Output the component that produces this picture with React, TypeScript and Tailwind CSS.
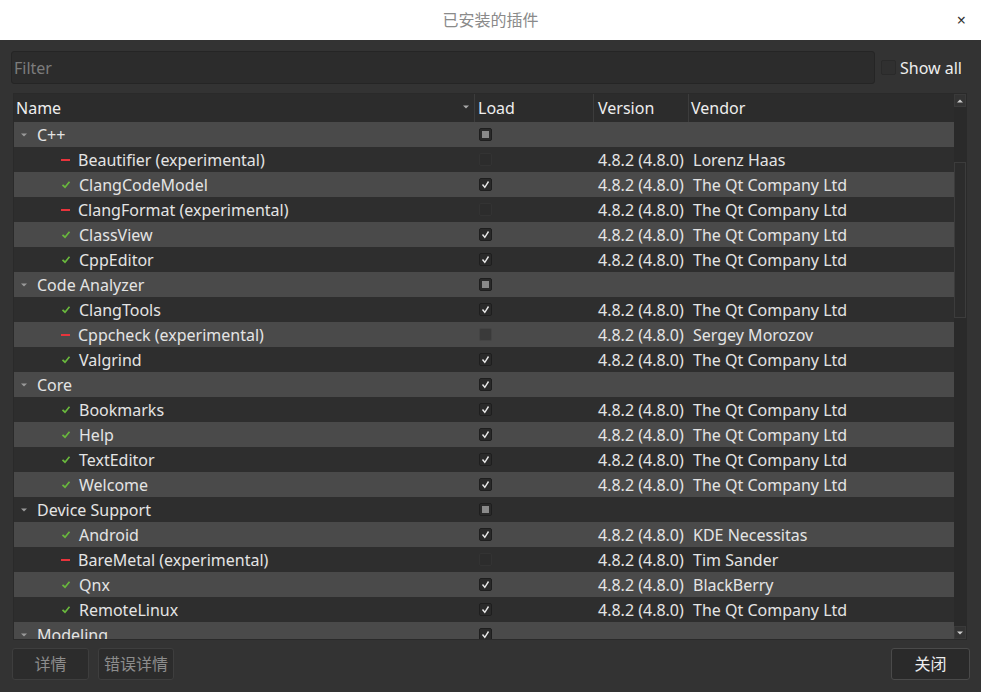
import React from "react";

type Row =
  | { kind: "cat"; name: string; state: "partial" | "checked" }
  | {
      kind: "item";
      name: string;
      ok: boolean;
      vendor: string;
    };

const QT = "The Qt Company Ltd";

const rows: Row[] = [
  { kind: "cat", name: "C++", state: "partial" },
  { kind: "item", name: "Beautifier (experimental)", ok: false, vendor: "Lorenz Haas" },
  { kind: "item", name: "ClangCodeModel", ok: true, vendor: QT },
  { kind: "item", name: "ClangFormat (experimental)", ok: false, vendor: QT },
  { kind: "item", name: "ClassView", ok: true, vendor: QT },
  { kind: "item", name: "CppEditor", ok: true, vendor: QT },
  { kind: "cat", name: "Code Analyzer", state: "partial" },
  { kind: "item", name: "ClangTools", ok: true, vendor: QT },
  { kind: "item", name: "Cppcheck (experimental)", ok: false, vendor: "Sergey Morozov" },
  { kind: "item", name: "Valgrind", ok: true, vendor: QT },
  { kind: "cat", name: "Core", state: "checked" },
  { kind: "item", name: "Bookmarks", ok: true, vendor: QT },
  { kind: "item", name: "Help", ok: true, vendor: QT },
  { kind: "item", name: "TextEditor", ok: true, vendor: QT },
  { kind: "item", name: "Welcome", ok: true, vendor: QT },
  { kind: "cat", name: "Device Support", state: "partial" },
  { kind: "item", name: "Android", ok: true, vendor: "KDE Necessitas" },
  { kind: "item", name: "BareMetal (experimental)", ok: false, vendor: "Tim Sander" },
  { kind: "item", name: "Qnx", ok: true, vendor: "BlackBerry" },
  { kind: "item", name: "RemoteLinux", ok: true, vendor: QT },
  { kind: "cat", name: "Modeling", state: "checked" },
];

const font = { fontFamily: '"Noto Sans", "Noto Sans CJK SC", sans-serif' };

function Box({ state, light }: { state: "checked" | "partial" | "off"; light: boolean }) {
  if (state === "off") {
    return (
      <div
        className={
          "h-[13px] w-[13px] rounded-[2px] " +
          (light ? "bg-[#3a3a3a] border border-[#444]" : "bg-[#2c2c2c] border border-[#333]")
        }
      />
    );
  }
  return (
    <div className="flex h-[13px] w-[13px] items-center justify-center rounded-[2px] border border-[#1e1e1e] bg-[#2a2a2a]">
      {state === "partial" ? (
        <div className="h-[7px] w-[7px] bg-[#8a8a8a]" />
      ) : (
        <svg width="9" height="9" viewBox="0 0 9 9">
          <path d="M1.5 4.5 L3.8 7.3 L7.5 1.5" fill="none" stroke="#e8e8e8" strokeWidth="1.4" />
        </svg>
      )}
    </div>
  );
}

function Arrow() {
  return (
    <svg width="8" height="6" viewBox="0 0 8 6" className="shrink-0">
      <path d="M1 1.5 L7 1.5 L4 4.5 Z" fill="#9a9a9a" />
    </svg>
  );
}

function Status({ ok }: { ok: boolean }) {
  return ok ? (
    <svg width="10" height="9" viewBox="0 0 10 9" className="shrink-0">
      <path d="M1.5 4.8 L4 7.2 L8.5 1.8" fill="none" stroke="#69b83d" strokeWidth="1.7" />
    </svg>
  ) : (
    <div className="h-[2px] w-[9px] shrink-0 bg-[#e8343c]" />
  );
}

export default function App() {
  return (
    <div className="flex h-[692px] w-[981px] flex-col overflow-hidden bg-[#333333] text-[#e4e4e4]" style={font}>
      <div className="relative flex h-[40px] shrink-0 items-center justify-center bg-white">
        <span className="text-[16px] text-[#8a8a8a]">已安装的插件</span>
        <span className="absolute right-[15px] top-[8px] text-[16px] text-[#333]">×</span>
      </div>

      <div className="flex h-[33px] items-center pl-[11px] pr-[18px] mt-[11px]">
        <div className="flex h-[33px] w-[864px] items-center rounded-[3px] border border-[#252525] bg-[#2c2c2c] px-[2px]">
          <span className="text-[16px] text-[#7c7c7c]">Filter</span>
        </div>
        <div className="ml-[6px] h-[15px] w-[15px] rounded-[2px] border border-[#2a2a2a] bg-[#303030]" />
        <span className="ml-[4px] text-[16px] text-[#eeeeee]">Show all</span>
      </div>

      <div className="ml-[13px] mt-[9px] flex h-[547px] w-[954px] border border-[#2a2a2a]">
        <div className="flex w-[940px] flex-col">
          <div className="grid h-[28px] shrink-0 grid-cols-[460px_119px_95px_266px] bg-[#2c2c2c] text-[16px] text-[#eeeeee]">
            <div className="relative flex items-center pl-[2px]">
              Name
              <svg width="8" height="6" viewBox="0 0 8 6" className="absolute right-[4px] top-[10px]">
                <path d="M1 1.5 L7 1.5 L4 4.5 Z" fill="#aaaaaa" />
              </svg>
            </div>
            <div className="flex items-center border-l border-[#3c3c3c] pl-[3px]">Load</div>
            <div className="flex items-center border-l border-[#3c3c3c] pl-[4px]">Version</div>
            <div className="flex items-center border-l border-[#3c3c3c] pl-[2px]">Vendor</div>
          </div>
          <div className="flex-1 overflow-hidden">
            {rows.map((r, i) => {
              const light = i % 2 === 0;
              return (
                <div
                  key={r.name}
                  className={
                    "grid h-[25px] grid-cols-[460px_119px_95px_266px] text-[16px] " +
                    (light ? "bg-[#4a4a4a]" : "bg-[#2e2e2e]")
                  }
                >
                  {r.kind === "cat" ? (
                    <div className="flex items-center pl-[6px]">
                      <Arrow />
                      <span className="ml-[9px]">{r.name}</span>
                    </div>
                  ) : (
                    <div className="flex items-center pl-[47px]">
                      <Status ok={r.ok} />
                      <span className="ml-[8px]">{r.name}</span>
                    </div>
                  )}
                  <div className="flex items-center pl-[5px]">
                    <Box
                      state={r.kind === "cat" ? r.state : r.ok ? "checked" : "off"}
                      light={light}
                    />
                  </div>
                  <div className="flex items-center pl-[5px]">
                    {r.kind === "item" ? "4.8.2 (4.8.0)" : ""}
                  </div>
                  <div className="flex items-center pl-[5px]">
                    {r.kind === "item" ? r.vendor : ""}
                  </div>
                </div>
              );
            })}
          </div>
        </div>
        <div className="flex w-[13px] flex-col bg-[#2a2a2a]">
          <div className="flex h-[13px] items-center justify-center border border-[#3a3a3a] bg-[#333]">
            <svg width="8" height="6" viewBox="0 0 8 6">
              <path d="M1 4.5 L7 4.5 L4 1.5 Z" fill="#cccccc" />
            </svg>
          </div>
          <div className="h-[55px]" />
          <div className="h-[156px] border border-[#3c3c3c] bg-[#2c2c2c]" />
          <div className="flex-1" />
          <div className="flex h-[13px] items-center justify-center border border-[#3a3a3a] bg-[#333]">
            <svg width="8" height="6" viewBox="0 0 8 6">
              <path d="M1 1.5 L7 1.5 L4 4.5 Z" fill="#cccccc" />
            </svg>
          </div>
        </div>
      </div>

      <div className="mt-[8px] flex items-center pl-[12px] pr-[11px]">
        <button className="flex h-[32px] w-[77px] items-center justify-center rounded-[3px] border border-[#3e3e3e] bg-[#2c2c2c] text-[16px] text-[#8c8c8c]">
          详情
        </button>
        <button className="ml-[9px] flex h-[32px] w-[76px] items-center justify-center rounded-[3px] border border-[#3e3e3e] bg-[#2c2c2c] text-[16px] text-[#8c8c8c]">
          错误详情
        </button>
        <div className="flex-1" />
        <button className="flex h-[32px] w-[79px] items-center justify-center rounded-[3px] border border-[#4a4a4a] bg-[#2a2a2a] text-[16px] text-[#eeeeee]">
          关闭
        </button>
      </div>
    </div>
  );
}
